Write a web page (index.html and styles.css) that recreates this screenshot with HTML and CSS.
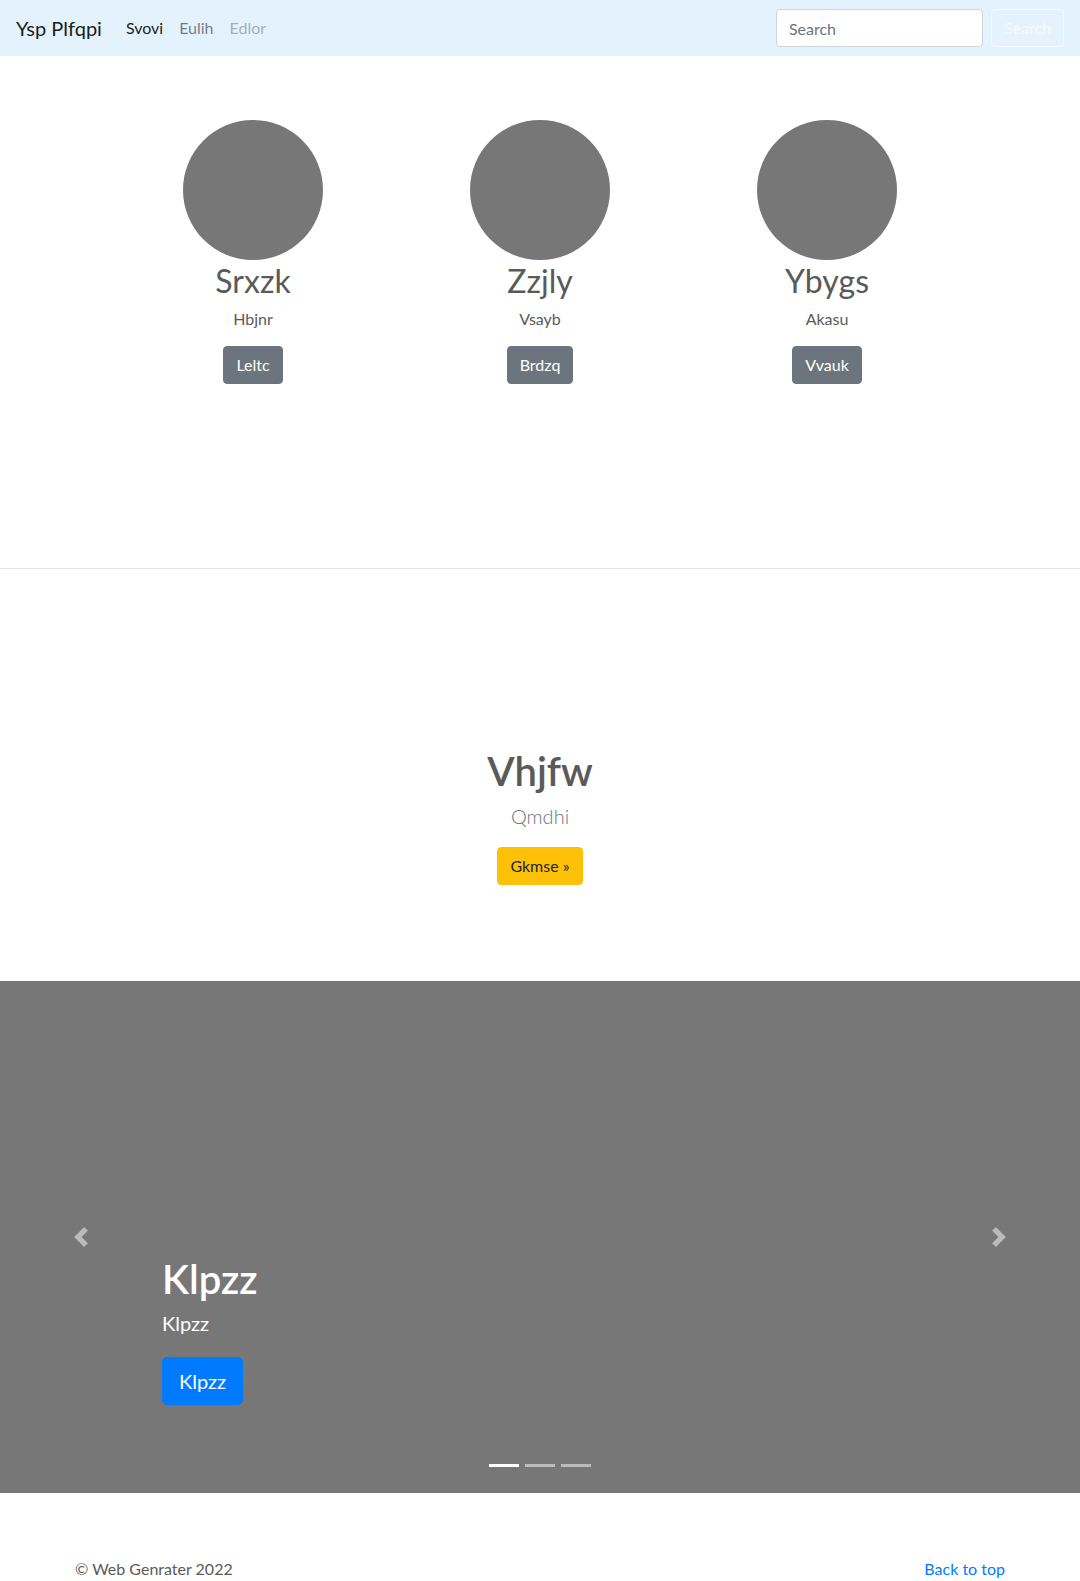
FILE: index.html
```html
<!DOCTYPE html>
<html lang="en">
<head>
<meta charset="utf-8">
<title>Ysp Plfqpi</title>
<link rel="stylesheet" href="styles.css">
</head>
<body>
<nav class="navbar">
  <a class="brand" href="#">Ysp Plfqpi</a>
  <ul class="nav">
    <li><a class="nav-link active" href="#">Svovi</a></li>
    <li><a class="nav-link" href="#">Eulih</a></li>
    <li><a class="nav-link disabled" href="#">Edlor</a></li>
  </ul>
  <form class="search">
    <input class="search-input" type="search" placeholder="Search">
    <button class="btn btn-outline-light" type="button">Search</button>
  </form>
</nav>

<main>
  <section class="marketing">
    <div class="cols">
      <div class="col">
        <div class="avatar"></div>
        <h2 class="col-title">Srxzk</h2>
        <p class="col-text">Hbjnr</p>
        <a class="btn btn-secondary" href="#">Leltc</a>
      </div>
      <div class="col">
        <div class="avatar"></div>
        <h2 class="col-title">Zzjly</h2>
        <p class="col-text">Vsayb</p>
        <a class="btn btn-secondary" href="#">Brdzq</a>
      </div>
      <div class="col">
        <div class="avatar"></div>
        <h2 class="col-title">Ybygs</h2>
        <p class="col-text">Akasu</p>
        <a class="btn btn-secondary" href="#">Vvauk</a>
      </div>
    </div>
  </section>

  <hr class="divider">

  <section class="feature">
    <h1 class="feature-title">Vhjfw</h1>
    <p class="feature-lead">Qmdhi</p>
    <a class="btn btn-warning" href="#">Gkmse &raquo;</a>
  </section>

  <div class="carousel">
    <a class="control control-prev" href="#" aria-label="Previous">
      <svg class="control-icon" viewBox="0 0 8 8" width="20" height="20"><path fill="#fff" d="M5.25 0l-4 4 4 4 1.5-1.5L4.25 4l2.5-2.5L5.25 0z"/></svg>
    </a>
    <div class="caption">
      <h1 class="caption-title">Klpzz</h1>
      <p class="caption-text">Klpzz</p>
      <a class="btn btn-lg btn-primary" href="#">Klpzz</a>
    </div>
    <a class="control control-next" href="#" aria-label="Next">
      <svg class="control-icon" viewBox="0 0 8 8" width="20" height="20"><path fill="#fff" d="M2.75 0l-1.5 1.5L3.75 4l-2.5 2.5L2.75 8l4-4-4-4z"/></svg>
    </a>
    <ol class="indicators">
      <li class="indicator active"></li>
      <li class="indicator"></li>
      <li class="indicator"></li>
    </ol>
  </div>

  <footer class="footer">
    <p class="footer-text">&copy; Web Genrater 2022</p>
    <p class="footer-text"><a class="footer-link" href="#">Back to top</a></p>
  </footer>
</main>
</body>
</html>
```

FILE: styles.css
```css
* { box-sizing: border-box; }

html, body {
  margin: 0;
  padding: 0;
}

body {
  font-family: Lato, "Open Sans", "Liberation Sans", sans-serif;
  font-size: 16px;
  line-height: 1.5;
  color: #5a5a5a;
  background: #fff;
}

a { text-decoration: none; }

/* Navbar */
.navbar {
  display: flex;
  align-items: center;
  height: 56px;
  padding: 8px 16px;
  background: #e3f2fd;
}

.brand {
  font-size: 20px;
  line-height: 30px;
  padding: 5px 0;
  margin-right: 16px;
  color: rgba(0, 0, 0, 0.9);
}

.nav {
  display: flex;
  flex: 1;
  list-style: none;
  margin: 0;
  padding: 0;
}

.nav-link {
  display: block;
  padding: 8px;
  line-height: 24px;
  color: rgba(0, 0, 0, 0.5);
}

.nav-link.active { color: rgba(0, 0, 0, 0.9); }
.nav-link.disabled { color: rgba(0, 0, 0, 0.3); }

.search {
  display: flex;
  align-items: center;
  gap: 8px;
  margin: 0;
}

.search-input {
  width: 207px;
  height: 38px;
  padding: 6px 12px;
  font-family: inherit;
  font-size: 16px;
  color: #495057;
  background: #fff;
  border: 1px solid #ced4da;
  border-radius: 4px;
}

.search-input::placeholder { color: #6c757d; }

/* Buttons */
.btn {
  display: inline-block;
  font-family: inherit;
  font-size: 16px;
  line-height: 24px;
  padding: 6px 12px;
  border: 1px solid transparent;
  border-radius: 4px;
  background: transparent;
  cursor: pointer;
}

.btn-outline-light {
  color: #f8f9fa;
  border-color: #f8f9fa;
}

.btn-secondary {
  color: #fff;
  background: #6c757d;
  border-color: #6c757d;
}

.btn-warning {
  color: #212529;
  background: #ffc107;
  border-color: #ffc107;
}

.btn-primary {
  color: #fff;
  background: #007bff;
  border-color: #007bff;
}

.btn-lg {
  font-size: 20px;
  line-height: 30px;
  padding: 8px 16px;
  border-radius: 5px;
}

/* Marketing */
.marketing {
  padding: 64px 0 184px;
}

.cols {
  display: grid;
  grid-template-columns: repeat(3, 287px);
  justify-content: center;
}

.col {
  display: flex;
  flex-direction: column;
  align-items: center;
  text-align: center;
}

.avatar {
  width: 140px;
  height: 140px;
  border-radius: 50%;
  background: #777;
}

.col-title {
  margin: 3px 0 0;
  font-size: 32px;
  font-weight: 400;
  line-height: 1.1;
  color: #5a5a5a;
}

.col-text {
  margin: 9px 0 15px;
  line-height: 24px;
}

.divider {
  margin: 0;
  border: 0;
  border-top: 1px solid rgba(0, 0, 0, 0.1);
}

/* Feature */
.feature {
  display: flex;
  flex-direction: column;
  align-items: center;
  padding: 178px 0 96px;
  text-align: center;
}

.feature-title {
  margin: 0;
  font-size: 40px;
  font-weight: 600;
  line-height: 48px;
  color: #5a5a5a;
}

.feature-lead {
  margin: 6px 0 16px;
  font-size: 20px;
  font-weight: 300;
  line-height: 30px;
  color: #6c757d;
}

/* Carousel */
.carousel {
  position: relative;
  height: 512px;
  background: #777;
  margin-bottom: 64px;
}

.control {
  position: absolute;
  top: 0;
  bottom: 0;
  width: 15%;
  display: flex;
  align-items: center;
  justify-content: center;
}

.control-prev { left: 0; }
.control-next { right: 0; }

.control-icon {
  width: 20px;
  height: 20px;
  opacity: 0.5;
}

.caption {
  position: absolute;
  left: 15%;
  right: 15%;
  bottom: 88px;
  color: #fff;
  text-align: left;
}

.caption-title {
  margin: 0 0 5px;
  font-size: 40px;
  font-weight: 600;
  line-height: 48px;
}

.caption-text {
  margin: 0 0 19px;
  font-size: 20px;
  line-height: 30px;
}

.caption .btn { vertical-align: top; }

.indicators {
  position: absolute;
  left: 0;
  right: 0;
  bottom: 26px;
  display: flex;
  justify-content: center;
  gap: 6px;
  list-style: none;
  margin: 0;
  padding: 0;
}

.indicator {
  width: 30px;
  height: 3px;
  background: #fff;
  opacity: 0.5;
}

.indicator.active { opacity: 1; }

/* Footer */
.footer {
  display: flex;
  justify-content: space-between;
  width: 930px;
  margin: 0 auto;
}

.footer-text {
  margin: 0 0 16px;
  line-height: 24px;
}

.footer-link { color: #007bff; }
```
